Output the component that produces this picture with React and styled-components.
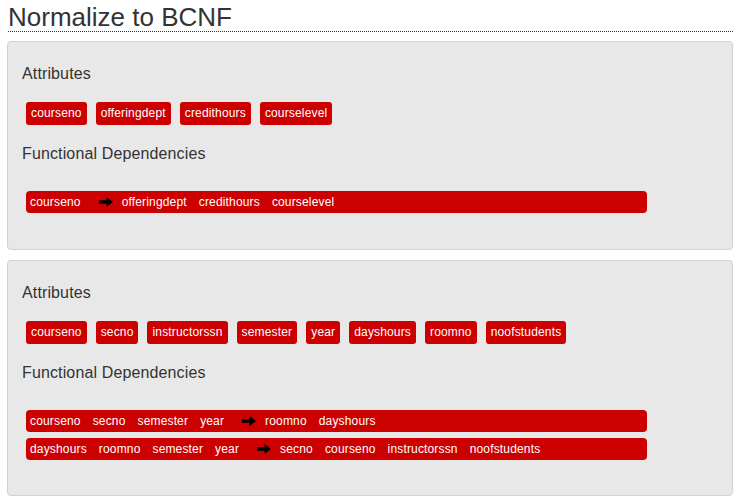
import React from "react";
import styled, { createGlobalStyle } from "styled-components";

const Global = createGlobalStyle`
  html, body { margin: 0; padding: 0; background: #fff; }
  body { font-family: "Liberation Sans", Arial, sans-serif; color: #333; }
`;

const Page = styled.div`
  width: 726px;
  padding-left: 7px;
`;

const Title = styled.h2`
  margin: 3px 0 9px 1px;
  font-size: 26px;
  line-height: 28px;
  font-weight: normal;
  color: #333;
  border-bottom: 1px dotted #333;
`;

const Panel = styled.div`
  background: #e8e8e8;
  border: 1px solid #d2d2d2;
  border-radius: 4px;
  padding: 22px 14px ${(p) => p.$bottom}px 14px;
  margin-bottom: 10px;
`;

const Heading = styled.h4`
  margin: 0;
  font-size: 16px;
  letter-spacing: 0.13px;
  line-height: 20px;
  font-weight: normal;
  color: #333;
`;

const BadgeRow = styled.div`
  display: flex;
  gap: 9px;
  padding-left: 4px;
  margin: 18px 0 19px;
`;

const Badge = styled.span`
  display: inline-block;
  background: #cc0000;
  color: #fff;
  font-size: 12px;
  letter-spacing: 0.16px;
  line-height: 23px;
  height: 23px;
  padding: 0 5px;
  border-radius: 3px;
`;

const FDList = styled.div`
  display: flex;
  flex-direction: column;
  gap: 6px;
  margin-top: 27px;
  padding-left: 4px;
`;

const FDBar = styled.div`
  display: flex;
  align-items: center;
  gap: 12px;
  width: 621px;
  height: 22px;
  box-sizing: border-box;
  padding-left: 4px;
  background: #cc0000;
  border-radius: 4px;
  color: #fff;
  font-size: 12px;
  letter-spacing: 0.16px;
`;

const Arrow = styled.svg`
  display: block;
  margin: 0 -3px 0 6px;
  flex: none;
`;

const ArrowIcon = () => (
  <Arrow width="14" height="10" viewBox="0 0 14 10">
    <path d="M0 3.3 H7.5 V0 L14 5 L7.5 10 V6.7 H0 Z" fill="#000" />
  </Arrow>
);

const data = [
  {
    attrs: ["courseno", "offeringdept", "credithours", "courselevel"],
    fds: [[["courseno"], ["offeringdept", "credithours", "courselevel"]]],
    bottom: 36,
  },
  {
    attrs: [
      "courseno",
      "secno",
      "instructorssn",
      "semester",
      "year",
      "dayshours",
      "roomno",
      "noofstudents",
    ],
    fds: [
      [["courseno", "secno", "semester", "year"], ["roomno", "dayshours"]],
      [
        ["dayshours", "roomno", "semester", "year"],
        ["secno", "courseno", "instructorssn", "noofstudents"],
      ],
    ],
    bottom: 35,
  },
];

export default function App() {
  return (
    <Page>
      <Global />
      <Title>Normalize to BCNF</Title>
      {data.map((t, i) => (
        <Panel key={i} $bottom={t.bottom}>
          <Heading>Attributes</Heading>
          <BadgeRow>
            {t.attrs.map((a) => (
              <Badge key={a}>{a}</Badge>
            ))}
          </BadgeRow>
          <Heading>Functional Dependencies</Heading>
          <FDList>
            {t.fds.map(([lhs, rhs], j) => (
              <FDBar key={j}>
                {lhs.map((w) => (
                  <span key={w}>{w}</span>
                ))}
                <ArrowIcon />
                {rhs.map((w) => (
                  <span key={w}>{w}</span>
                ))}
              </FDBar>
            ))}
          </FDList>
        </Panel>
      ))}
    </Page>
  );
}
